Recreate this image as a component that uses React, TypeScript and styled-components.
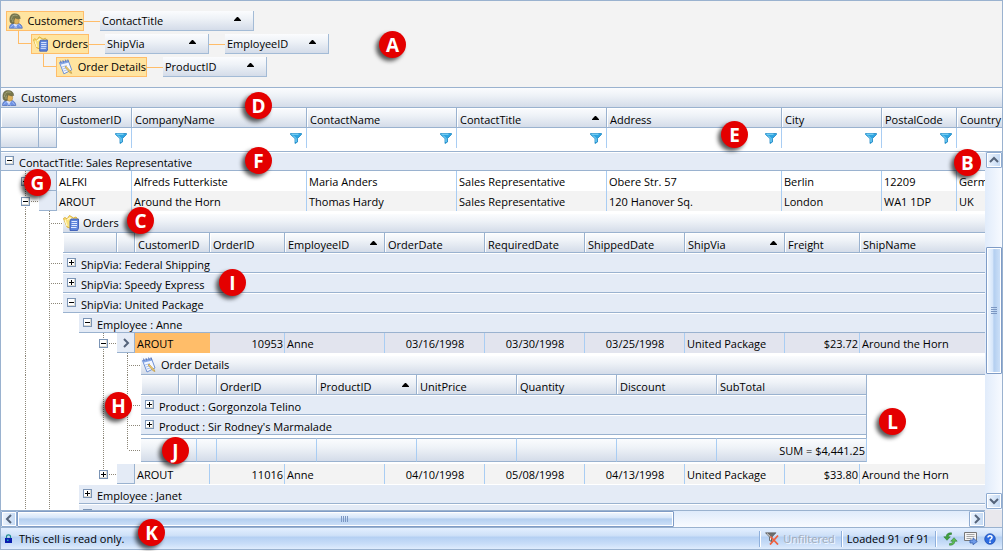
import React from "react";
import styled, { createGlobalStyle, css } from "styled-components";

const LINE = "#9ab2cf";
const CELL_LINE = "#a9cdf3";
const GROUP_BG = "#e4ebf6";
const HEAD_BG = "linear-gradient(#fbfcfe, #eef2f7 40%, #d4dce9)";

const GlobalStyle = createGlobalStyle`
  *, *::before, *::after { box-sizing: border-box; }
  html, body { margin: 0; background: #fff; }
  body, button, input {
    font-family: "Open Sans", "Noto Sans", sans-serif;
    font-size: 11px;
    line-height: 16px;
    color: #000;
  }
  button { padding: 0; border: 0; background: none; cursor: pointer; }
`;

/* ---------- frame ---------- */

const Page = styled.div`
  position: relative;
  display: flex;
  height: 100vh;
  padding: 0 1px 1px 0;
`;

const Frame = styled.main`
  display: flex;
  flex-direction: column;
  flex: 1;
  min-width: 0;
  border: 1px solid ${LINE};
`;

/* ---------- group-by area ---------- */

const GroupArea = styled.section`
  display: flex;
  flex-direction: column;
  gap: 3px;
  padding: 10px 5px;
  height: 87px;
  background: #f3f3f3;
  border-bottom: 1px solid ${LINE};
`;

const GroupLine = styled.div<{ $indent?: number }>`
  display: flex;
  align-items: center;
  height: 20px;
  margin-left: ${(p) => p.$indent || 0}px;
`;

const Elbow = styled.span`
  align-self: flex-start;
  flex: none;
  width: 13px;
  height: 13px;
  margin-top: -3px;
  border: solid #ffbd69;
  border-width: 0 0 1px 1px;
`;

const Link = styled.span`
  flex: none;
  width: 16px;
  height: 1px;
  background: #ffbd69;
`;

const Level = styled.span<{ $w: number }>`
  display: flex;
  align-items: center;
  gap: 4px;
  flex: none;
  width: ${(p) => p.$w}px;
  height: 20px;
  padding-left: 1px;
  background: #ffe4a0;
  border: 1px solid #ffbd69;
  white-space: nowrap;
`;

const Chip = styled.button<{ $w: number }>`
  display: flex;
  align-items: center;
  justify-content: space-between;
  flex: none;
  width: ${(p) => p.$w}px;
  height: 20px;
  padding: 1px 12px 0 2px;
  background: ${HEAD_BG};
  border: solid #a3bbd6;
  border-width: 0 1px 1px 0;

  > svg {
    align-self: flex-start;
    margin-top: 5px;
  }
`;

/* ---------- grid tables ---------- */

const Grid = styled.table`
  width: 100%;
  table-layout: fixed;
  border-collapse: separate;
  border-spacing: 0;

  th, td {
    padding: 0;
    overflow: hidden;
    white-space: nowrap;
    text-align: left;
    font-weight: 400;
  }
`;

const Caption = styled.th<{ $h?: number }>`
  height: ${(p) => p.$h || 19}px;
  background: ${HEAD_BG};
  border-bottom: 1px solid ${LINE};
`;

const CaptionBody = styled.div`
  display: flex;
  align-items: center;
  gap: 4px;
  height: 16px;
`;

const Head = styled.th`
  height: 20px;
  background: ${HEAD_BG};
  border: solid ${LINE};
  border-width: 0 1px 1px 0;
  box-shadow: inset 1px 1px #fff;

  &:last-child { border-right: 0; }
`;

const EndHead = styled(Head)`
  && { border-right: 1px solid ${LINE}; }
`;

const HeadBody = styled.div`
  display: flex;
  align-items: flex-start;
  justify-content: space-between;
  height: 19px;
  padding: 4px 7px 0 3px;
  line-height: 15px;

  > svg { margin-top: 4px; }
`;

const Handle = styled.td<{ $plain?: boolean }>`
  height: 20px;
  background: ${(p) => (p.$plain ? GROUP_BG : HEAD_BG)};
  border: solid ${LINE};
  border-width: 0 1px 1px 0;
`;

const HandleBody = styled.div`
  display: flex;
  justify-content: center;
`;

const FilterCell = styled.td`
  height: 20px;
  background: #fff;
  border-right: 1px solid ${CELL_LINE};
  &:last-child { border-right: 0; }
`;

const FilterBody = styled.div`
  display: flex;
  align-items: center;
  height: 18px;
  padding-right: 4px;
`;

const FilterInput = styled.input`
  flex: 1;
  min-width: 0;
  height: 16px;
  padding: 0 2px;
  border: 0;
  outline: 0;
  background: transparent;
`;

const FilterButton = styled.button`
  display: flex;
  flex: none;
`;

type Align = "left" | "right" | "center";
const Cell = styled.td<{ $align?: Align; $tone?: "alt" | "active" | "picked" }>`
  && {
    height: 20px;
    padding: 1px 1px 0 2px;
    text-align: ${(p) => p.$align || "left"};
    border-right: 1px solid ${(p) => (p.$tone === "picked" ? "#ffbd69" : CELL_LINE)};
    background: ${(p) =>
      p.$tone === "alt" ? "#f3f3f3" : p.$tone === "active" ? "#e2e4ee" : p.$tone === "picked" ? "#ffbd69" : "#fff"};
  }
  &&:last-child { border-right: 0; }
`;

const GroupCell = styled.td<{ $h?: number; $edge?: boolean }>`
  height: ${(p) => p.$h || 20}px;
  background: ${GROUP_BG};
  border-bottom: 1px solid ${LINE};
  box-shadow: inset 0 1px #fff;
  ${(p) => p.$edge && css`border-right: 1px solid ${LINE};`}
`;

const GroupBody = styled.div`
  display: flex;
  align-items: flex-start;
  gap: 5px;
  height: 18px;
  padding-left: 4px;

  > button { margin-top: 4px; }
  > span { padding-top: 3px; line-height: 16px; }
`;

const SumCell = styled.td`
  && {
    height: 24px;
    padding: 1px 1px 0;
    text-align: right;
    background: ${HEAD_BG};
    border: solid ${LINE};
    border-width: 1px 1px 1px 0;
    border-right-color: ${CELL_LINE};
  }
`;

const GapCell = styled.td<{ $h: number }>`
  height: ${(p) => p.$h}px;
  line-height: 0;
`;

const GapEdge = styled(GapCell)`
  border-right: 1px solid ${LINE};
`;

/* Tree gutter: dotted rails at the given offsets and an optional stub to the right. */
const DOTS = "#8c8678";
const Gutter = styled.td<{ $rails: number[]; $stub?: [number, number]; $ends?: boolean }>`
  background: ${(p) => {
    const layers = p.$rails.map((x, i) => {
      const half = p.$ends && i === p.$rails.length - 1;
      return `repeating-linear-gradient(to bottom, ${DOTS} 0 1px, transparent 1px 2px) ${x}px 0 / 1px ${half ? "50%" : "100%"} no-repeat`;
    });
    if (p.$stub)
      layers.push(
        `repeating-linear-gradient(to right, ${DOTS} 0 1px, transparent 1px 2px) ${p.$stub[0]}px 50% / ${p.$stub[1]}px 1px no-repeat`
      );
    return layers.join(", ");
  }};
`;

const NodeSlot = styled.div<{ $x: number }>`
  display: flex;
  padding-left: ${(p) => p.$x}px;
`;

const Toggle = styled.button`
  display: flex;
  flex: none;
  width: 9px;
  height: 9px;
`;

/* ---------- scroll area ---------- */

const ScrollArea = styled.section`
  display: grid;
  grid-template-columns: minmax(0, 1fr) 17px;
  grid-template-rows: minmax(0, 1fr) 17px;
  flex: 1;
  min-height: 0;
  margin-top: 3px;
  border-top: 1px solid ${LINE};
`;

const Viewport = styled.div`
  overflow: hidden;
`;

const VBar = styled.div`
  display: flex;
  flex-direction: column;
  padding: 0 0 1px 1px;
  background: linear-gradient(90deg, #e1ecfb, #f7faff);
`;

const HBar = styled.div`
  display: flex;
  border-top: 1px solid ${LINE};
  background: linear-gradient(#dfebfb, #f9fbff);
`;

const Corner = styled.div`
  background: #e9e8ed;
`;

const Arrow = styled.button`
  display: flex;
  align-items: center;
  justify-content: center;
  flex: none;
  width: 16px;
  height: 16px;
  border: 1px solid #8fabd0;
  border-radius: 1px;
  box-shadow: inset 0 0 0 1px #fff;
  background: linear-gradient(90deg, #eef5fe, #c2d8f3);
`;

const Track = styled.span<{ $grow: number }>`
  flex: ${(p) => p.$grow} 1 0;
`;

const Thumb = styled.span<{ $grow: number; $vertical?: boolean }>`
  display: flex;
  align-items: center;
  justify-content: center;
  flex: ${(p) => p.$grow} 1 0;
  border: 1px solid #7f9cc6;
  border-radius: 1px;
  box-shadow: inset 0 0 0 1px #fff;
  background: linear-gradient(${(p) => (p.$vertical ? "90deg" : "180deg")}, #f2f8ff, #d6e6fa 40%, #b4cff0 50%, #cfe2f9);
`;

/* ---------- status bar ---------- */

const StatusBar = styled.footer`
  display: flex;
  align-items: center;
  height: 22px;
  padding: 0 6px 0 4px;
  border-top: 1px solid ${LINE};
  background: linear-gradient(#e3efff, #cfe1f8 35%, #b5d0f3 45%, #c8ddf8 75%, #dfecfd);
  white-space: nowrap;
`;

const StatusText = styled.span`
  flex: 1;
  padding-left: 7px;
`;

const StatusItem = styled.div`
  display: flex;
  align-items: center;
  gap: 4px;
  height: 16px;
  padding: 0 6px 0 5px;
  border-left: 1px solid #8fb0dc;
  box-shadow: inset 1px 0 #fff;
`;

const Muted = styled.span`
  color: #a3abb8;
  text-shadow: 1px 1px #f4f9ff;
`;

const IconButtons = styled(StatusItem)`
  gap: 6px;
  padding: 0 0 0 7px;

  > button { display: flex; }
`;

/* ---------- callouts over the grid ---------- */

const Callout = styled.span<{ $x: number; $y: number }>`
  position: absolute;
  left: ${(p) => p.$x}px;
  top: ${(p) => p.$y}px;
  display: flex;
  align-items: center;
  justify-content: center;
  width: 27px;
  height: 27px;
  border-radius: 50%;
  background: #e40000;
  color: #fff;
  font-size: 19px;
  font-weight: 700;
  line-height: 26px;
  box-shadow: -3px 3px 4px rgba(0, 0, 0, 0.65);
`;

/* ---------- icons ---------- */

const PersonIcon = () => (
  <svg width="16" height="16" viewBox="0 0 16 16" aria-hidden="true">
    <path d="M1.500 15.500c0-3 1.500-4.500 3.500-5l3 1 2.500-1.200c2.500.7 4.300 2.700 4.300 5.200z" fill="#6f93e4" stroke="#4a68b4" strokeWidth=".7" />
    <path d="m5 10.800 3 4.200 2.500-4.500z" fill="#dbe5fb" />
    <path d="m2.500 14.500 3.500-3M13.500 14.500l-2.500-3M6.500 15.500l1.500-2 1.500 2" stroke="#a9c0f6" strokeWidth=".9" fill="none" />
    <ellipse cx="8.700" cy="7.700" rx="3" ry="3.500" fill="#dfb45e" stroke="#a97b34" strokeWidth=".5" />
    <path d="M2.200 9C1.300 4.500 2.500.6 6.500.5c4-.1 6 1.700 6.200 5-1.800.6-4 .2-5-.8C6.500 5.800 6 7.500 6.200 10.500 4.500 10.800 2.800 10.300 2.200 9z" fill="#77774c" stroke="#55553a" strokeWidth=".5" />
    <path d="M3.800 3.800C5 2 7.500 1.500 9.800 2.300M3.300 7c0-1.300.4-2.300 1.400-3.300M5 9c-.2-1.200 0-2.400.5-3.300" stroke="#a8a882" strokeWidth=".9" fill="none" />
  </svg>
);

const OrdersIcon = () => (
  <svg width="16" height="16" viewBox="0 0 16 16" aria-hidden="true">
    <path d="M.5 3.500 2 2.500l2 1.500L6.500.5l4 2.500 2.500-1 1.500 2L8 13.500 4 12z" fill="#fbe27a" stroke="#d9a92e" strokeWidth=".9" />
    <path d="m2 5 2 6M4 4.500l3-1.500 3 1" stroke="#fff8d0" strokeWidth="1.200" fill="none" />
    <path d="M8 4h7.500v9l-1 2.500H7V6z" fill="#5f86dc" stroke="#3b5bb5" strokeWidth=".9" />
    <path d="M8.500 6.500h5.500M8.500 8.500h5.500M8.500 10.500h5.500M8 12.500h5.500" stroke="#dfe9ff" />
  </svg>
);

const DetailsIcon = () => (
  <svg width="16" height="16" viewBox="0 0 16 16" aria-hidden="true">
    <path d="m1.500 3.500 9-2 3.500 9.500-8 4z" fill="#f3f7ff" stroke="#6d90d2" />
    <path d="m1.500 3.500 9-2 .8 2-9.200 2.200z" fill="#85a6e6" />
    <path d="m2.500 1.500.7 2.500M5 1l.7 2.500M7.500.5l.7 2.500M10 .3l.6 2.500" stroke="#4a68b4" strokeWidth=".8" />
    <path d="m4 8 5-1.500M5 10l4-1.200M5.800 12l3.500-1" stroke="#a9c1ee" />
    <path d="m8 7 5.200 5.700.8 1.800-1.700-.5L7 8z" fill="#f5cf6c" stroke="#b08a35" strokeWidth=".6" />
  </svg>
);

const SortMark = () => (
  <svg width="7" height="4" viewBox="0 0 7 4" aria-hidden="true">
    <path d="M0 4V3.300L3 0h1l3 3.300V4z" fill="#000" />
  </svg>
);

const Funnel = () => (
  <svg width="12" height="11" viewBox="0 0 12 11" aria-hidden="true">
    <path d="M.5.5h11v1L7.500 5.500V9l-2.500 1.500v-5l-4.500-4z" fill="#2fa4e0" stroke="#1d86c4" strokeWidth=".8" />
    <path d="M1.500 1.200h7M3 2.500l3 3V9" stroke="#8fdcfb" fill="none" />
  </svg>
);

const Box = ({ open, label }: { open?: boolean; label: string }) => (
  <Toggle aria-label={`${open ? "Collapse" : "Expand"} ${label}`} aria-expanded={!!open}>
    <svg width="9" height="9" viewBox="0 0 9 9" aria-hidden="true" shapeRendering="crispEdges">
      <rect width="9" height="9" fill="#7b94b5" />
      <rect x="1" y="1" width="7" height="7" fill="#fff" />
      <path d="M1 7.500h7M7.500 1v7" stroke="#dcdad2" fill="none" />
      <rect x="2" y="4" width="5" height="1" fill="#000" />
      {!open && <rect x="4" y="2" width="1" height="5" fill="#000" />}
    </svg>
  </Toggle>
);

const Chevron = ({ d }: { d: string }) => (
  <svg width="10" height="10" viewBox="0 0 10 10" aria-hidden="true">
    <path d={d} fill="none" stroke="#55647a" strokeWidth="2" />
  </svg>
);

const Grip = ({ vertical }: { vertical?: boolean }) => (
  <svg width="8" height="8" viewBox="0 0 8 8" aria-hidden="true" shapeRendering="crispEdges">
    <path d={vertical ? "M1 .5h6M1 2.500h6M1 4.500h6M1 6.500h6" : "M.5 1v6M2.500 1v6M4.500 1v6M6.500 1v6"} stroke="#7c97c2" />
  </svg>
);

const LockIcon = () => (
  <svg width="7" height="9" viewBox="0 0 7 9" aria-hidden="true">
    <path d="M1.500 4V2.500C1.500.3 5.500.3 5.500 2.500V4" fill="none" stroke="#1a8a8c" strokeWidth="1.200" />
    <path d="M0 4h7v5H0z" fill="#0a1fae" />
    <path d="M2 5.500h1.500V7H2z" fill="#18b5c0" />
  </svg>
);

const ClearFilterIcon = () => (
  <svg width="14" height="13" viewBox="0 0 14 13" aria-hidden="true">
    <path d="M.5.8h10.500L7 5v5L4.500 8.500V5z" fill="#6d6d6d" stroke="#555" strokeWidth=".6" />
    <path d="m2 1.500 3.500 3.300v3.500" stroke="#e6e6e6" fill="none" />
    <path d="m5.500 4.500 7.500 8M13 3.500l-8 9" stroke="#f0603f" strokeWidth="1.800" />
  </svg>
);

const RefreshIcon = () => (
  <svg width="15" height="14" viewBox="0 0 15 14" aria-hidden="true">
    <path d="M8.500.8C5.500.6 3.200 1.800 3.200 4.800H.8L4 8.300l3.300-3.500H5.200c0-1.500 1-2.300 3.300-2.400z" fill="#3fa33c" stroke="#256f28" strokeWidth=".5" />
    <path d="M6.500 13.200c3 .2 5.300-1 5.300-4h2.400L11 5.700 7.700 9.200h2.100c0 1.500-1 2.300-3.300 2.400z" fill="#5bbd52" stroke="#256f28" strokeWidth=".5" />
  </svg>
);

const ExportIcon = () => (
  <svg width="14" height="13" viewBox="0 0 14 13" aria-hidden="true">
    <path d="M.5.500h12v8H.5z" fill="#f5f5f5" stroke="#777" />
    <path d="M2.500 2.500h8M2.500 4.500h8M2.500 6.500h5" stroke="#a5a5a5" />
    <path d="M6 8h3V5.800l4.300 3.700L9 12.800V11H6z" fill="#6f9be8" stroke="#2c56a8" strokeWidth=".7" />
  </svg>
);

const HelpIcon = () => (
  <svg width="12" height="12" viewBox="0 0 12 12" aria-hidden="true">
    <circle cx="6" cy="6" r="5.300" fill="#2c6be0" stroke="#1c4cae" strokeWidth=".7" />
    <path d="M4 4.600C4 2 8 2 8 4.500 8 6 6 6 6 7.500" fill="none" stroke="#fff" strokeWidth="1.500" />
    <path d="M5.200 8.500h1.600v1.400H5.200z" fill="#fff" />
  </svg>
);

/* ---------- data ---------- */

type Col = { name: string; w?: number; sorted?: boolean; align?: Align };

const customerCols: Col[] = [
  { name: "CustomerID", w: 75 },
  { name: "CompanyName", w: 175 },
  { name: "ContactName", w: 150 },
  { name: "ContactTitle", w: 150, sorted: true },
  { name: "Address", w: 175 },
  { name: "City", w: 100 },
  { name: "PostalCode", w: 75 },
  { name: "Country" },
];

const customers = [
  ["ALFKI", "Alfreds Futterkiste", "Maria Anders", "Sales Representative", "Obere Str. 57", "Berlin", "12209", "Germany"],
  ["AROUT", "Around the Horn", "Thomas Hardy", "Sales Representative", "120 Hanover Sq.", "London", "WA1 1DP", "UK"],
];

const orderCols: Col[] = [
  { name: "CustomerID", w: 75 },
  { name: "OrderID", w: 75, align: "right" },
  { name: "EmployeeID", w: 100, sorted: true },
  { name: "OrderDate", w: 100, align: "center" },
  { name: "RequiredDate", w: 100, align: "center" },
  { name: "ShippedDate", w: 100, align: "center" },
  { name: "ShipVia", w: 100, sorted: true },
  { name: "Freight", w: 75, align: "right" },
  { name: "ShipName" },
];

const orders = [
  ["AROUT", "10953", "Anne", "03/16/1998", "03/30/1998", "03/25/1998", "United Package", "$23.72", "Around the Horn"],
  ["AROUT", "11016", "Anne", "04/10/1998", "05/08/1998", "04/13/1998", "United Package", "$33.80", "Around the Horn"],
];

const detailCols: Col[] = [
  { name: "OrderID", w: 100 },
  { name: "ProductID", w: 100, sorted: true },
  { name: "UnitPrice", w: 100 },
  { name: "Quantity", w: 100 },
  { name: "Discount", w: 100 },
  { name: "SubTotal", w: 150 },
];

const callouts: [string, number, number][] = [
  ["A", 379, 31],
  ["B", 954, 149],
  ["C", 127, 207],
  ["D", 245, 92],
  ["E", 721, 121],
  ["F", 245, 147],
  ["G", 24, 169],
  ["H", 105, 392],
  ["I", 219, 269],
  ["J", 162, 437],
  ["K", 138, 519],
  ["L", 879, 408],
];

/* ---------- pieces ---------- */

const Cols = ({ lead, cols, tail }: { lead: number[]; cols: Col[]; tail?: boolean }) => (
  <colgroup>
    {lead.map((w, i) => (
      <col key={i} style={{ width: w }} />
    ))}
    {cols.map((c) => (
      <col key={c.name} style={c.w ? { width: c.w } : undefined} />
    ))}
    {tail && <col />}
  </colgroup>
);

const HeadLabel = ({ col }: { col: Col }) => (
  <HeadBody>
    {col.name}
    {col.sorted && <SortMark />}
  </HeadBody>
);

const GroupLabel = ({ text, open }: { text: string; open?: boolean }) => (
  <GroupBody>
    <Box open={open} label={text || "group"} />
    <span>{text}</span>
  </GroupBody>
);

const DetailsTable = () => {
  const rails = [24, 48, 102, 126];
  const stub: [number, number] = [128, 11];
  return (
    <Grid aria-label="Order Details">
      <Cols lead={[140, 38, 18, 20]} cols={detailCols} tail />
      <tbody>
        <tr>
          <Gutter $rails={rails} />
          <GapCell $h={3} colSpan={10} />
        </tr>
        <tr>
          <Gutter $rails={rails} $stub={stub} />
          <Caption colSpan={10}>
            <CaptionBody>
              <DetailsIcon />
              Order Details
            </CaptionBody>
          </Caption>
        </tr>
        <tr>
          <Gutter $rails={rails} />
          <Head />
          <Head />
          <Head />
          {detailCols.map((c) => (
            <EndHead key={c.name} scope="col">
              <HeadLabel col={c} />
            </EndHead>
          ))}
          <td />
        </tr>
        {["Product : Gorgonzola Telino", "Product : Sir Rodney's Marmalade"].map((t) => (
          <tr key={t}>
            <Gutter $rails={rails} $stub={stub} />
            <GroupCell colSpan={9} $edge>
              <GroupLabel text={t} />
            </GroupCell>
            <td />
          </tr>
        ))}
        <tr>
          <Gutter $rails={rails} />
          <GapEdge $h={3} colSpan={9} />
          <td />
        </tr>
        <tr>
          <Gutter $rails={rails} $stub={stub} $ends />
          <SumCell colSpan={2} />
          <SumCell />
          <SumCell />
          <SumCell />
          <SumCell />
          <SumCell />
          <SumCell />
          <SumCell>SUM = $4,441.25</SumCell>
          <td />
        </tr>
        <tr>
          <Gutter $rails={[24, 48, 102]} />
          <GapCell $h={2} colSpan={10} />
        </tr>
      </tbody>
    </Grid>
  );
};

const OrderRow = ({ values, active }: { values: string[]; active?: boolean }) => (
  <tr>
    <Gutter colSpan={3} $rails={[24, 48, 102]} $stub={[108, 7]} $ends={!active}>
      <NodeSlot $x={98}>
        <Box open={active} label={`order ${values[1]}`} />
      </NodeSlot>
    </Gutter>
    <Handle $plain>
      {active && (
        <HandleBody>
          <Chevron d="m3 1 4 4-4 4" />
        </HandleBody>
      )}
    </Handle>
    {values.map((v, i) => (
      <Cell key={i} $align={orderCols[i].align} $tone={active ? (i === 0 ? "picked" : "active") : "alt"}>
        {v}
      </Cell>
    ))}
  </tr>
);

const OrdersTable = () => {
  const rails = [24, 48];
  const stub: [number, number] = [50, 11];
  return (
    <Grid aria-label="Orders">
      <Cols lead={[62, 16, 38, 18]} cols={orderCols} />
      <tbody>
        <tr>
          <Gutter $rails={rails} />
          <GapCell $h={3} colSpan={12} />
        </tr>
        <tr>
          <Gutter $rails={rails} $stub={stub} />
          <Caption colSpan={12}>
            <CaptionBody>
              <OrdersIcon />
              Orders
            </CaptionBody>
          </Caption>
        </tr>
        <tr>
          <Gutter $rails={rails} />
          <Head colSpan={2} />
          <Head />
          {orderCols.map((c) => (
            <Head key={c.name} scope="col">
              <HeadLabel col={c} />
            </Head>
          ))}
        </tr>
        {["Federal Shipping", "Speedy Express", "United Package"].map((t, i) => (
          <tr key={t}>
            <Gutter $rails={rails} $stub={stub} />
            <GroupCell colSpan={12}>
              <GroupLabel text={`ShipVia: ${t}`} open={i === 2} />
            </GroupCell>
          </tr>
        ))}
        <tr>
          <Gutter colSpan={2} $rails={rails} />
          <GroupCell colSpan={11}>
            <GroupLabel text="Employee : Anne" open />
          </GroupCell>
        </tr>
        <OrderRow values={orders[0]} active />
        <tr>
          <td colSpan={13}>
            <DetailsTable />
          </td>
        </tr>
        <OrderRow values={orders[1]} />
        {["Employee : Janet", ""].map((t, i) => (
          <tr key={i}>
            <Gutter colSpan={2} $rails={rails} />
            <GroupCell colSpan={11}>
              <GroupLabel text={t} />
            </GroupCell>
          </tr>
        ))}
      </tbody>
    </Grid>
  );
};

export default function App() {
  return (
    <>
      <GlobalStyle />
      <Page>
        <Frame>
          <GroupArea aria-label="Group by">
            <GroupLine>
              <Level $w={78}>
                <PersonIcon />
                Customers
              </Level>
              <Link />
              <Chip $w={154}>
                ContactTitle
                <SortMark />
              </Chip>
            </GroupLine>
            <GroupLine $indent={12}>
              <Elbow />
              <Level $w={58}>
                <OrdersIcon />
                Orders
              </Level>
              <Link />
              <Chip $w={104}>
                ShipVia
                <SortMark />
              </Chip>
              <Link />
              <Chip $w={104}>
                EmployeeID
                <SortMark />
              </Chip>
            </GroupLine>
            <GroupLine $indent={37}>
              <Elbow />
              <Level $w={91}>
                <DetailsIcon />
                Order Details
              </Level>
              <Link />
              <Chip $w={104}>
                ProductID
                <SortMark />
              </Chip>
            </GroupLine>
          </GroupArea>

          <Grid aria-label="Customer columns">
            <Cols lead={[38, 18]} cols={customerCols} />
            <thead>
              <tr>
                <Caption colSpan={10} $h={20}>
                  <CaptionBody>
                    <PersonIcon />
                    Customers
                  </CaptionBody>
                </Caption>
              </tr>
              <tr>
                <Head />
                <Head />
                {customerCols.map((c) => (
                  <Head key={c.name} scope="col">
                    <HeadLabel col={c} />
                  </Head>
                ))}
              </tr>
            </thead>
            <tbody>
              <tr>
                <Handle />
                <Handle />
                {customerCols.map((c) => (
                  <FilterCell key={c.name}>
                    <FilterBody>
                      <FilterInput aria-label={`Filter ${c.name}`} />
                      {c.w && (
                        <FilterButton aria-label={`Choose filter for ${c.name}`}>
                          <Funnel />
                        </FilterButton>
                      )}
                    </FilterBody>
                  </FilterCell>
                ))}
              </tr>
            </tbody>
          </Grid>

          <ScrollArea>
            <Viewport>
              <Grid aria-label="Customers">
                <Cols lead={[38, 18]} cols={customerCols} />
                <tbody>
                  <tr>
                    <GroupCell colSpan={10} $h={19}>
                      <GroupLabel text="ContactTitle: Sales Representative" open />
                    </GroupCell>
                  </tr>
                  {customers.map((row, r) => (
                    <tr key={row[0]}>
                      <Gutter $rails={[24]} $stub={[30, 8]}>
                        <NodeSlot $x={20}>
                          <Box open={r === 1} label={row[0]} />
                        </NodeSlot>
                      </Gutter>
                      <Handle $plain />
                      {row.map((v, i) => (
                        <Cell key={i} $tone={r === 1 ? "alt" : undefined}>
                          {v}
                        </Cell>
                      ))}
                    </tr>
                  ))}
                  <tr>
                    <td colSpan={10}>
                      <OrdersTable />
                    </td>
                  </tr>
                </tbody>
              </Grid>
            </Viewport>
            <VBar>
              <Arrow aria-label="Scroll up">
                <Chevron d="m1 7 4-4 4 4" />
              </Arrow>
              <Track $grow={79} />
              <Thumb $grow={126} $vertical>
                <Grip vertical />
              </Thumb>
              <Track $grow={119} />
              <Arrow aria-label="Scroll down">
                <Chevron d="m1 3 4 4 4-4" />
              </Arrow>
            </VBar>
            <HBar>
              <Arrow aria-label="Scroll left">
                <Chevron d="M7 1 3 5l4 4" />
              </Arrow>
              <Thumb $grow={656}>
                <Grip />
              </Thumb>
              <Track $grow={296} />
              <Arrow aria-label="Scroll right">
                <Chevron d="m3 1 4 4-4 4" />
              </Arrow>
            </HBar>
            <Corner />
          </ScrollArea>

          <StatusBar>
            <LockIcon />
            <StatusText>This cell is read only.</StatusText>
            <StatusItem>
              <ClearFilterIcon />
              <Muted>Unfiltered</Muted>
            </StatusItem>
            <StatusItem>Loaded 91 of 91</StatusItem>
            <IconButtons>
              <button aria-label="Refresh">
                <RefreshIcon />
              </button>
              <button aria-label="Export">
                <ExportIcon />
              </button>
              <button aria-label="Help">
                <HelpIcon />
              </button>
            </IconButtons>
          </StatusBar>
        </Frame>
        {callouts.map(([letter, x, y]) => (
          <Callout key={letter} $x={x} $y={y}>
            {letter}
          </Callout>
        ))}
      </Page>
    </>
  );
}
